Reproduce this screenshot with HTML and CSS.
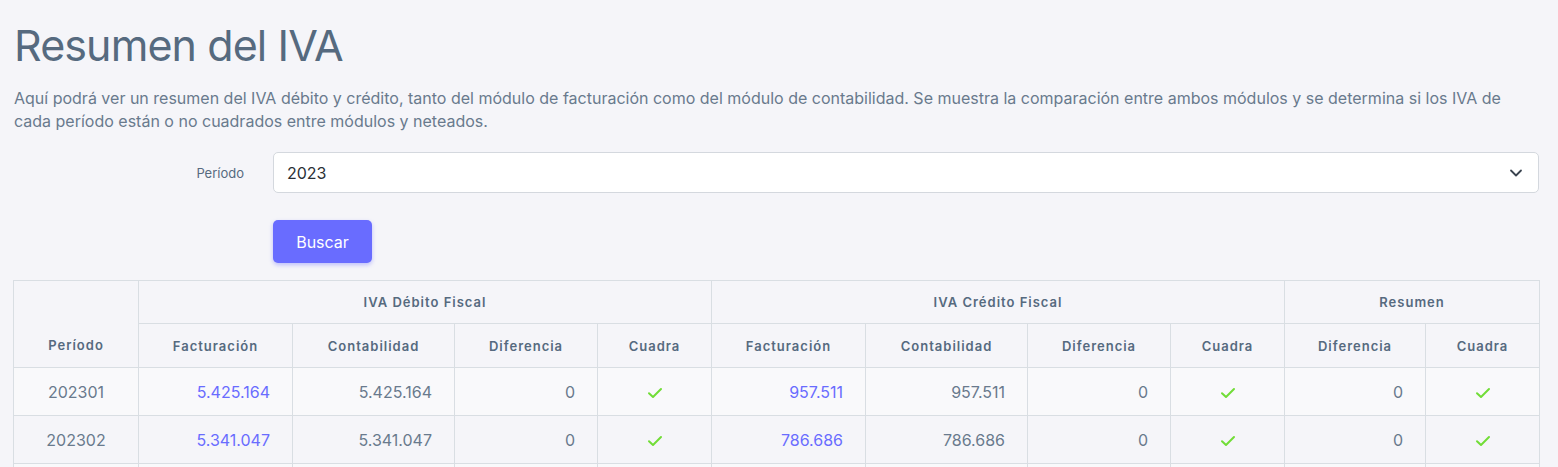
FILE: index.html
```html
<!DOCTYPE html>
<html lang="es">
<head>
<meta charset="utf-8">
<title>Resumen del IVA</title>
<link rel="stylesheet" href="styles.css">
</head>
<body>
<main class="page">
  <h1 class="title">Resumen del IVA</h1>
  <p class="intro">Aquí podrá ver un resumen del IVA débito y crédito, tanto del módulo de facturación como del módulo de contabilidad. Se muestra la comparación entre ambos módulos y se determina si los IVA de cada período están o no cuadrados entre módulos y neteados.</p>

  <form class="filter">
    <div class="form-row">
      <label class="form-label" for="periodo">Período</label>
      <div class="select-wrap">
        <select id="periodo" class="form-select">
          <option>2023</option>
        </select>
        <svg class="chevron" width="14" height="10" viewBox="0 0 14 10"><path d="M2 2.5l5 5 5-5" fill="none" stroke="#3b4450" stroke-width="1.8" stroke-linecap="round" stroke-linejoin="round"/></svg>
      </div>
    </div>
    <div class="form-row actions">
      <span class="form-label"></span>
      <button type="button" class="btn-primary">Buscar</button>
    </div>
  </form>

  <table class="summary">
    <colgroup>
      <col class="c-per"><col class="c-fac"><col class="c-con"><col class="c-dif"><col class="c-cua">
      <col class="c-fac"><col class="c-con"><col class="c-dif"><col class="c-cua">
      <col class="c-rdif"><col class="c-cua">
    </colgroup>
    <thead>
      <tr class="group-row">
        <th rowspan="2" class="per-head">Período</th>
        <th colspan="4">IVA Débito Fiscal</th>
        <th colspan="4">IVA Crédito Fiscal</th>
        <th colspan="2">Resumen</th>
      </tr>
      <tr class="sub-row">
        <th>Facturación</th><th>Contabilidad</th><th>Diferencia</th><th>Cuadra</th>
        <th>Facturación</th><th>Contabilidad</th><th>Diferencia</th><th>Cuadra</th>
        <th>Diferencia</th><th>Cuadra</th>
      </tr>
    </thead>
    <tbody>
      <tr class="odd">
        <td class="center">202301</td>
        <td class="num"><a class="link" href="#">5.425.164</a></td>
        <td class="num">5.425.164</td>
        <td class="num">0</td>
        <td class="center"><svg class="check" width="16" height="12" viewBox="0 0 16 12"><path d="M2 6.2l4 3.8 8-8" fill="none" stroke="#71dd37" stroke-width="2" stroke-linecap="round" stroke-linejoin="round"/></svg></td>
        <td class="num"><a class="link" href="#">957.511</a></td>
        <td class="num">957.511</td>
        <td class="num">0</td>
        <td class="center"><svg class="check" width="16" height="12" viewBox="0 0 16 12"><path d="M2 6.2l4 3.8 8-8" fill="none" stroke="#71dd37" stroke-width="2" stroke-linecap="round" stroke-linejoin="round"/></svg></td>
        <td class="num">0</td>
        <td class="center"><svg class="check" width="16" height="12" viewBox="0 0 16 12"><path d="M2 6.2l4 3.8 8-8" fill="none" stroke="#71dd37" stroke-width="2" stroke-linecap="round" stroke-linejoin="round"/></svg></td>
      </tr>
      <tr>
        <td class="center">202302</td>
        <td class="num"><a class="link" href="#">5.341.047</a></td>
        <td class="num">5.341.047</td>
        <td class="num">0</td>
        <td class="center"><svg class="check" width="16" height="12" viewBox="0 0 16 12"><path d="M2 6.2l4 3.8 8-8" fill="none" stroke="#71dd37" stroke-width="2" stroke-linecap="round" stroke-linejoin="round"/></svg></td>
        <td class="num"><a class="link" href="#">786.686</a></td>
        <td class="num">786.686</td>
        <td class="num">0</td>
        <td class="center"><svg class="check" width="16" height="12" viewBox="0 0 16 12"><path d="M2 6.2l4 3.8 8-8" fill="none" stroke="#71dd37" stroke-width="2" stroke-linecap="round" stroke-linejoin="round"/></svg></td>
        <td class="num">0</td>
        <td class="center"><svg class="check" width="16" height="12" viewBox="0 0 16 12"><path d="M2 6.2l4 3.8 8-8" fill="none" stroke="#71dd37" stroke-width="2" stroke-linecap="round" stroke-linejoin="round"/></svg></td>
      </tr>
      <tr class="odd">
        <td class="center"></td>
        <td class="num"></td>
        <td class="num"></td>
        <td class="num"></td>
        <td class="center"></td>
        <td class="num"></td>
        <td class="num"></td>
        <td class="num"></td>
        <td class="center"></td>
        <td class="num"></td>
        <td class="center"></td>
      </tr>
    </tbody>
  </table>
</main>
</body>
</html>
```

FILE: styles.css
```css
* { box-sizing: border-box; }

html, body {
  margin: 0;
  padding: 0;
  background: #f5f5f9;
  font-family: "Inter", "Liberation Sans", sans-serif;
  color: #697a8d;
}

.page {
  padding: 17px 19px 0 13px;
}

.title {
  margin: 0 0 0 1px;
  font-size: 43px;
  line-height: 56px;
  font-weight: 400;
  color: #566a7f;
  letter-spacing: -0.9px;
}

.intro {
  margin: 14px 0 0 1px;
  font-size: 16px;
  line-height: 23px;
  letter-spacing: 0;
  color: #697a8d;
}

.filter {
  margin-top: 19px;
}

.form-row {
  display: flex;
  align-items: center;
}

.form-label {
  flex: 0 0 260px;
  text-align: right;
  padding-right: 29px;
  font-size: 13px;
  color: #566a7f;
}

.select-wrap {
  position: relative;
  flex: 1;
}

.form-select {
  display: block;
  width: 100%;
  height: 41px;
  padding: 0 40px 0 13px;
  border: 1px solid #d4d8de;
  border-radius: 5px;
  background: #fff;
  font-family: "Inter", "Liberation Sans", sans-serif;
  font-size: 16px;
  color: #2a2f36;
  appearance: none;
  -webkit-appearance: none;
}

.chevron {
  position: absolute;
  right: 16px;
  top: 16px;
  pointer-events: none;
}

.actions {
  margin-top: 27px;
}

.btn-primary {
  width: 99px;
  height: 43px;
  border: 0;
  border-radius: 5px;
  background: #696cff;
  color: #fff;
  font-family: "Inter", "Liberation Sans", sans-serif;
  font-size: 16px;
  box-shadow: 0 2px 4px 0 rgba(105, 108, 255, 0.4);
}

.summary {
  margin-top: 17px;
  width: 1526px;
  table-layout: fixed;
  border-collapse: collapse;
}

.c-per { width: 125px; }
.c-fac { width: 154px; }
.c-con { width: 162px; }
.c-dif { width: 143px; }
.c-cua { width: 114px; }
.c-rdif { width: 141px; }

.summary th,
.summary td {
  border: 1px solid #d9dee3;
  padding: 0 22px;
}

.summary th {
  font-size: 13px;
  font-weight: 600;
  letter-spacing: 1px;
  color: #566a7f;
  text-align: center;
  white-space: nowrap;
}

.summary .group-row th { height: 43px; }
.summary .sub-row th { height: 44px; }
.summary .per-head { vertical-align: bottom; padding-bottom: 14px; }

.summary td {
  height: 48px;
  font-size: 16px;
  color: #697a8d;
}

.summary tr.odd td { background: #f9f9fb; }

.num { text-align: right; }
.center { text-align: center; }

.link {
  color: #696cff;
  text-decoration: none;
}

.check { display: inline-block; vertical-align: middle; }
```
